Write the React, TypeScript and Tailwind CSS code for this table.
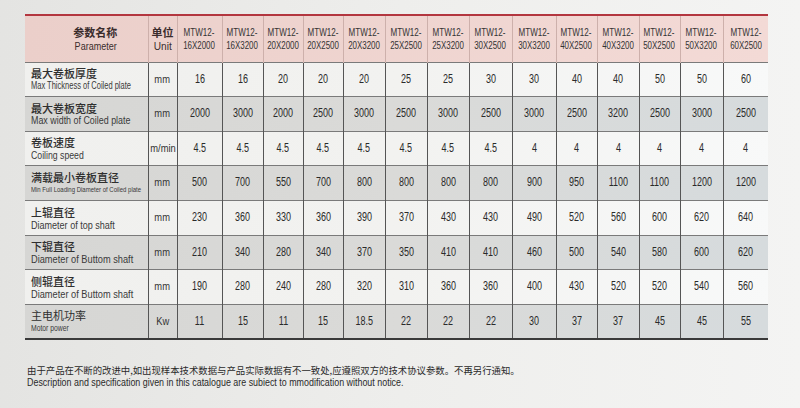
import React from 'react'

const sans = "font-['Liberation_Sans','Arial','Noto_Sans_CJK_SC',sans-serif]"
const cjk = "font-['Noto_Sans_CJK_SC','Liberation_Sans',sans-serif]"

const modelos = [
  '16X2000', '16X3200', '20X2000', '20X2500', '20X3200', '25X2500', '25X3200',
  '30X2500', '30X3200', '40X2500', '40X3200', '50X2500', '50X3200', '60X2500',
]

const anchos = [123, 29, 45, 41, 40, 40, 42, 42, 42, 43, 44, 41, 42, 41, 43, 45]

interface Fila {
  zh: string
  en: string
  enClase: string
  unidad: string
  valores: string[]
  gris: boolean
  alto: string
}

const filas: Fila[] = [
  {
    zh: '最大卷板厚度', en: 'Max Thickness of Coiled plate', enClase: 'text-[10px] scale-x-[0.75]', unidad: 'mm',
    valores: ['16', '16', '20', '20', '20', '25', '25', '30', '30', '40', '40', '50', '50', '60'],
    gris: false, alto: 'h-[34px]',
  },
  {
    zh: '最大卷板宽度', en: 'Max width of Coiled plate', enClase: 'text-[10px] scale-x-[0.89]', unidad: 'mm',
    valores: ['2000', '3000', '2000', '2500', '3000', '2500', '3000', '2500', '3000', '2500', '3200', '2500', '3000', '2500'],
    gris: true, alto: 'h-[35px]',
  },
  {
    zh: '卷板速度', en: 'Coiling speed', enClase: 'text-[10.5px] scale-x-[0.83]', unidad: 'm/min',
    valores: ['4.5', '4.5', '4.5', '4.5', '4.5', '4.5', '4.5', '4.5', '4', '4', '4', '4', '4', '4'],
    gris: false, alto: 'h-[34px]',
  },
  {
    zh: '满载最小卷板直径', en: 'Min Full Loading Diameter of Coiled plate', enClase: 'text-[8px] scale-x-[0.75]', unidad: 'mm',
    valores: ['500', '700', '550', '700', '800', '800', '800', '800', '900', '950', '1100', '1100', '1200', '1200'],
    gris: true, alto: 'h-[35px]',
  },
  {
    zh: '上辊直径', en: 'Diameter of top shaft', enClase: 'text-[10.5px] scale-x-[0.86]', unidad: 'mm',
    valores: ['230', '360', '330', '360', '390', '370', '430', '430', '490', '520', '560', '600', '620', '640'],
    gris: false, alto: 'h-[35px]',
  },
  {
    zh: '下辊直径', en: 'Diameter of Buttom shaft', enClase: 'text-[10.5px] scale-x-[0.88]', unidad: 'mm',
    valores: ['210', '340', '280', '340', '370', '350', '410', '410', '460', '500', '540', '580', '600', '620'],
    gris: true, alto: 'h-[34px]',
  },
  {
    zh: '侧辊直径', en: 'Diameter of Buttom shaft', enClase: 'text-[10.5px] scale-x-[0.88]', unidad: 'mm',
    valores: ['190', '280', '240', '280', '320', '310', '360', '360', '400', '430', '520', '520', '540', '560'],
    gris: false, alto: 'h-[35px]',
  },
  {
    zh: '主电机功率', en: 'Motor power', enClase: 'text-[8.5px] scale-x-[0.8]', unidad: 'Kw',
    valores: ['11', '15', '11', '15', '18.5', '22', '22', '22', '30', '37', '37', '45', '45', '55'],
    gris: true, alto: 'h-[35px]',
  },
]

export default function App() {
  return (
    <div className="w-[800px] h-[408px] overflow-hidden bg-linear-to-r from-[#e4e4e2] via-[#eeeeec] to-[#f4f4f3] text-[#2e2e2e]">
      <div className="pl-[25px] pt-[14px]">
        <table className="table-fixed border-collapse w-[743px]">
          <colgroup>
            {anchos.map((w, i) => (
              <col key={i} style={{ width: w }} />
            ))}
          </colgroup>
          <thead>
            <tr className="h-[47px] border-t-2 border-[#b3363f] bg-linear-to-r from-[#ebcfca] to-[#f3dad6]">
              <th className="border-r border-[#cdb0ab] font-normal p-0">
                <div className="flex flex-col items-center pl-[18px] text-[#3a2c2c]">
                  <span className={`${cjk} text-[11px] font-semibold leading-[15px]`}>参数名称</span>
                  <span className={`${sans} inline-block text-[11px] leading-[13px] scale-x-[0.82]`}>Parameter</span>
                </div>
              </th>
              <th className="border-r border-[#cdb0ab] font-normal p-0">
                <div className="flex flex-col items-center text-[#3a2c2c]">
                  <span className={`${cjk} text-[11px] font-semibold leading-[15px]`}>单位</span>
                  <span className={`${sans} inline-block text-[11px] leading-[13px] scale-x-[0.92]`}>Unit</span>
                </div>
              </th>
              {modelos.map((m, i) => (
                <th
                  key={m}
                  className={`font-normal p-0 ${i < modelos.length - 1 ? 'border-r border-[#cdb0ab]' : ''}`}
                >
                  <div className={`${sans} flex flex-col items-center text-[11.5px] leading-[13px] text-[#333]`}>
                    <span className="inline-block whitespace-nowrap scale-x-[0.7]">MTW12-</span>
                    <span className="inline-block whitespace-nowrap scale-x-[0.69]">{m}</span>
                  </div>
                </th>
              ))}
            </tr>
          </thead>
          <tbody>
            {filas.map((f, idx) => (
              <tr
                key={f.zh + idx}
                className={`${f.alto} border-t border-[#7a7a7a] ${
                  idx === filas.length - 1 ? 'border-b-2 border-b-[#3a3a3a]' : ''
                } ${
                  f.gris
                    ? 'bg-linear-to-r from-[#d6d6d4] via-[#dadad8] to-[#d6dbdd]'
                    : 'bg-linear-to-r from-[#f0f0ee] via-[#f2f2f0] to-[#f8f9f9]'
                }`}
              >
                <td className="border-r border-[#555] p-0 align-middle">
                  <div className="flex flex-col items-start pl-[6px]">
                    <span className={`${cjk} text-[11px] leading-[14px] ${idx === filas.length - 1 ? 'font-normal' : 'font-medium'} text-[#2f2f2f]`}>
                      {f.zh}
                    </span>
                    <span className={`${sans} inline-block origin-left whitespace-nowrap leading-[12px] text-[#3a3a3a] ${f.enClase}`}>
                      {f.en}
                    </span>
                  </div>
                </td>
                <td className="border-r border-[#555] p-0">
                  <div className={`${sans} flex justify-center text-[11px] text-[#333]`}>
                    <span className="inline-block scale-x-[0.85]">{f.unidad}</span>
                  </div>
                </td>
                {f.valores.map((v, i) => (
                  <td key={i} className={`p-0 ${i < f.valores.length - 1 ? 'border-r border-[#555]' : ''}`}>
                    <div className={`${sans} flex justify-center text-[12.5px] text-[#2a2a2a]`}>
                      <span className="inline-block scale-x-[0.72]">{v}</span>
                    </div>
                  </td>
                ))}
              </tr>
            ))}
          </tbody>
        </table>
      </div>

      {/* Nota al pie */}
      <div className="pl-[27px] pt-[24px]">
        <p className={`${cjk} text-[9.4px] leading-[12px] text-[#2a2a2a] whitespace-nowrap`}>
          由于产品在不断的改进中,如出现样本技术数据与产品实际数据有不一致处,应遵照双方的技术协议参数。不再另行通知。
        </p>
        <p className={`${sans} w-max origin-left scale-x-[0.89] text-[10px] leading-[13px] text-[#2a2a2a] whitespace-nowrap`}>
          Description and specification given in this catalogue are subiect to mmodification without notice.
        </p>
      </div>
    </div>
  )
}
